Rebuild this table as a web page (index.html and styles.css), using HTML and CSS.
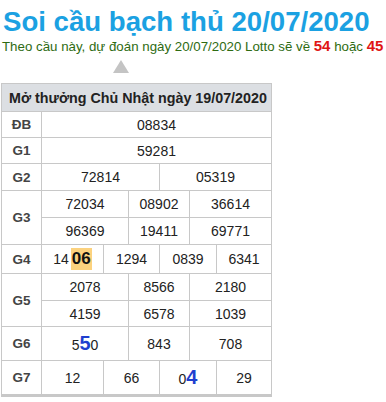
FILE: index.html
```html
<!DOCTYPE html>
<html lang="vi">
<head>
<meta charset="utf-8">
<title>Soi cầu bạch thủ 20/07/2020</title>
<link rel="stylesheet" href="styles.css">
</head>
<body>
<h1 class="title">Soi cầu bạch thủ 20/07/2020</h1>
<p class="sub">Theo cầu này, dự đoán ngày 20/07/2020 Lotto sẽ về <b class="hot">54</b> hoặc <b class="hot">45</b></p>
<div class="arrow"></div>
<table class="kq">
  <colgroup>
    <col class="c0"><col class="c1"><col class="c2"><col class="c3"><col class="c4"><col class="c5"><col class="c6">
  </colgroup>
  <tr class="r-head"><th colspan="7">Mở thưởng Chủ Nhật ngày 19/07/2020</th></tr>
  <tr class="r-db"><td class="lb">ĐB</td><td colspan="6">08834</td></tr>
  <tr class="r-g1"><td class="lb">G1</td><td colspan="6">59281</td></tr>
  <tr class="r-g2"><td class="lb">G2</td><td colspan="3">72814</td><td colspan="3">05319</td></tr>
  <tr class="r-g3a"><td class="lb" rowspan="2">G3</td><td colspan="2">72034</td><td colspan="2">08902</td><td colspan="2">36614</td></tr>
  <tr class="r-g3b"><td colspan="2">96369</td><td colspan="2">19411</td><td colspan="2">69771</td></tr>
  <tr class="r-g4"><td class="lb">G4</td><td class="small-lead">14<span class="mark">06</span></td><td colspan="2">1294</td><td colspan="2">0839</td><td>6341</td></tr>
  <tr class="r-g5a"><td class="lb" rowspan="2">G5</td><td colspan="2">2078</td><td colspan="2">8566</td><td colspan="2">2180</td></tr>
  <tr class="r-g5b"><td colspan="2">4159</td><td colspan="2">6578</td><td colspan="2">1039</td></tr>
  <tr class="r-g6"><td class="lb">G6</td><td colspan="2">5<span class="blue">5</span>0</td><td colspan="2">843</td><td colspan="2">708</td></tr>
  <tr class="r-g7"><td class="lb">G7</td><td>12</td><td colspan="2">66</td><td colspan="2">0<span class="blue">4</span></td><td>29</td></tr>
</table>
</body>
</html>
```

FILE: styles.css
```css
html, body {
  margin: 0;
  padding: 0;
  background: #fff;
}
body {
  font-family: "Liberation Sans", Arial, sans-serif;
  color: #222;
}
.title {
  margin: 0;
  padding: 6px 0 0 3px;
  font-size: 27.6px;
  line-height: 31px;
  font-weight: bold;
  color: #1ba1e2;
}
.sub {
  margin: 0;
  padding-left: 2px;
  font-size: 13.3px;
  line-height: 17px;
  color: #2e6b12;
  white-space: nowrap;
}
.hot {
  color: #e01515;
  font-size: 15px;
}
.arrow {
  width: 0;
  height: 0;
  margin: 5px 0 10px 113px;
  border-left: 8px solid transparent;
  border-right: 8px solid transparent;
  border-bottom: 13px solid #c4c4c4;
}
.kq {
  margin-left: 1px;
  border-collapse: collapse;
  table-layout: fixed;
  width: 271px;
  border: 1px solid #c8c8c8;
  border-bottom: 3px solid #c8c8c8;
  font-size: 14px;
}
.c0 { width: 40px; }
.c1 { width: 62px; }
.c2 { width: 25px; }
.c3 { width: 31px; }
.c4 { width: 30px; }
.c5 { width: 27px; }
.c6 { width: 55px; }
.kq th, .kq td {
  border: 1px solid #c8c8c8;
  padding: 0;
  text-align: center;
  vertical-align: middle;
}
.kq th {
  background: #dcdfe3;
  text-align: left;
  padding-left: 7px;
  font-size: 14.3px;
  color: #222;
  height: 27px;
}
.kq td.lb {
  font-weight: bold;
  font-size: 13.5px;
  color: #444;
}
.r-db td, .r-g1 td { height: 25px; }
.r-g2 td, .r-g3a td, .r-g3b td, .r-g5a td { height: 26px; }
.r-g5b td { height: 25px; }
.r-g4 td { height: 28px; }
.r-g6 td, .r-g7 td { height: 33px; }
.mark {
  display: inline-block;
  background: #fcd27e;
  font-weight: bold;
  font-size: 17px;
  line-height: 22px;
  padding: 0 1px;
  margin-left: 2px;
  color: #111;
}
.blue {
  color: #1f3fcf;
  font-weight: bold;
  font-size: 20px;
}
```
